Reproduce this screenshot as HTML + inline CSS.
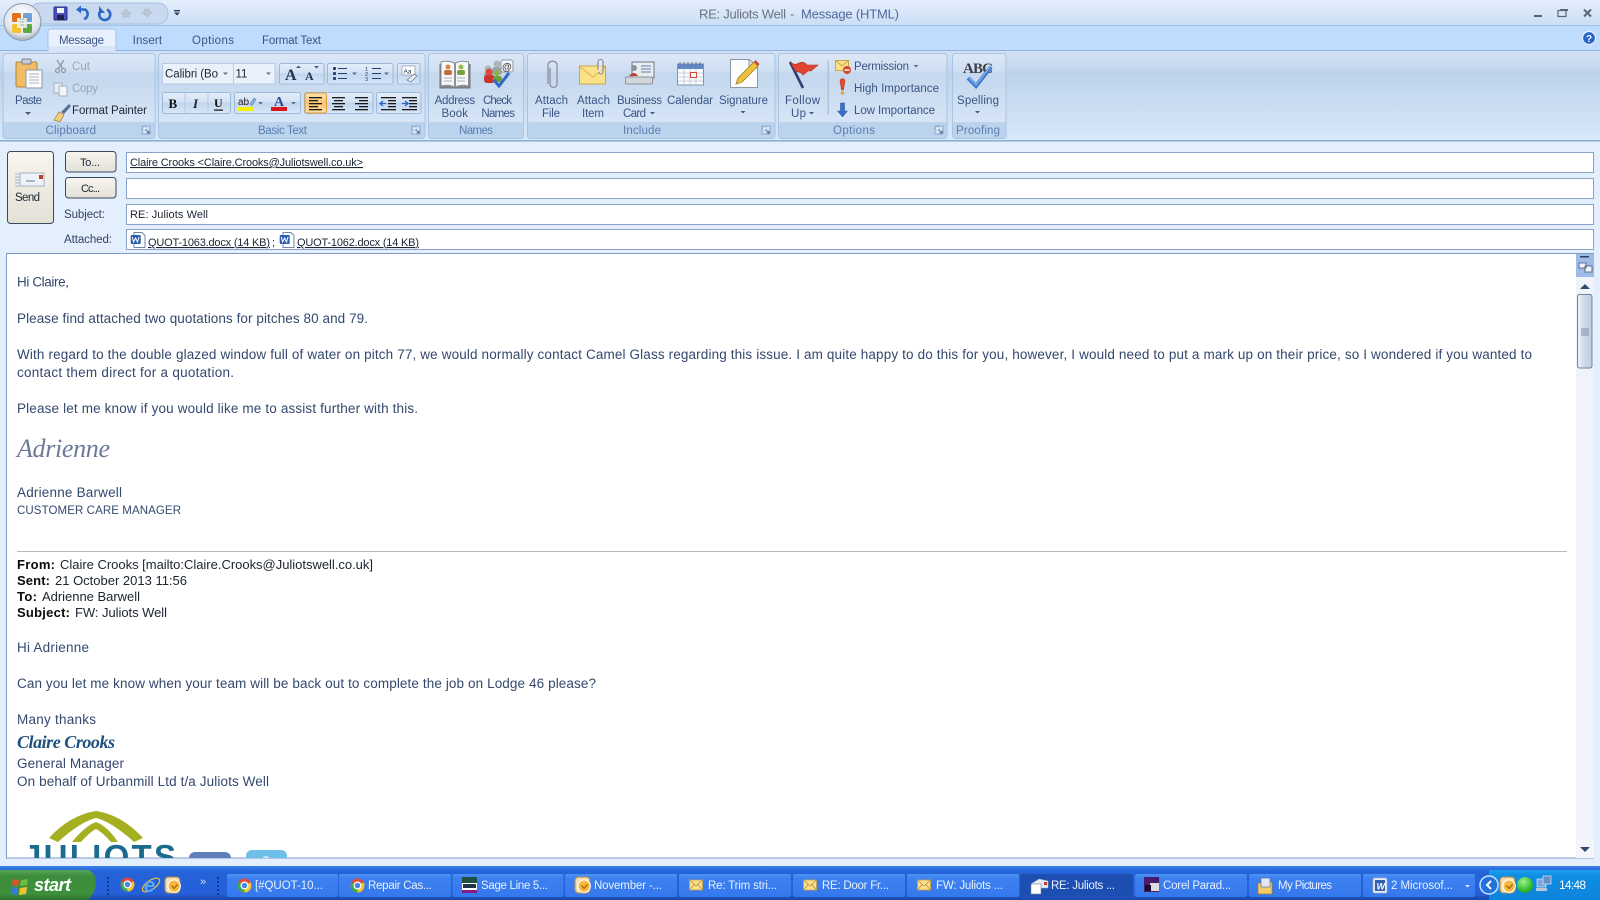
<!DOCTYPE html>
<html><head><meta charset="utf-8"><title>RE: Juliots Well - Message (HTML)</title>
<style>
html,body{margin:0;padding:0;width:1600px;height:900px;overflow:hidden;background:#e3effd}
svg{display:block}
text{font-family:"Liberation Sans",sans-serif;font-size:12px;fill:#3f5a88}
.r{font-size:11.5px;fill:#3a5484}
.rd{font-size:11.5px;fill:#222b3a}
.g{font-size:11.5px;fill:#5a7eb0}
.gy{font-size:11.5px;fill:#9aa6b6}
.b{font-size:13.5px;fill:#34486e}
.q{font-size:13px;fill:#1c2430}
.qb{font-size:13px;fill:#0a0a0a;font-weight:bold}
.h{font-size:11px;fill:#1d2536}
.l{font-size:11.5px;fill:#33435f}
.t{font-size:11.5px;fill:#e8f0ff}
</style></head><body>
<svg width="1600" height="900" viewBox="0 0 1600 900" xmlns="http://www.w3.org/2000/svg">
<defs>
<linearGradient id="tb" x1="0" y1="0" x2="0" y2="1"><stop offset="0" stop-color="#e4effd"/><stop offset=".5" stop-color="#d8e6f8"/><stop offset="1" stop-color="#cbdef5"/></linearGradient>
<linearGradient id="rib" x1="0" y1="0" x2="0" y2="1"><stop offset="0" stop-color="#d3e2f6"/><stop offset=".2" stop-color="#c7d9ef"/><stop offset=".25" stop-color="#bcd2ea"/><stop offset="1" stop-color="#d8e8fa"/></linearGradient>
<linearGradient id="grp" x1="0" y1="0" x2="0" y2="1"><stop offset="0" stop-color="#dce8f8"/><stop offset=".2" stop-color="#d0dff2"/><stop offset=".24" stop-color="#c4d7ed"/><stop offset="1" stop-color="#dce9f9"/></linearGradient>
<linearGradient id="btn" x1="0" y1="0" x2="0" y2="1"><stop offset="0" stop-color="#e4eefb"/><stop offset=".45" stop-color="#d2e1f4"/><stop offset=".5" stop-color="#c1d5ee"/><stop offset="1" stop-color="#d9e7f8"/></linearGradient>
<linearGradient id="act" x1="0" y1="0" x2="0" y2="1"><stop offset="0" stop-color="#fde2ac"/><stop offset=".5" stop-color="#fbc56e"/><stop offset="1" stop-color="#fde0a5"/></linearGradient>
<linearGradient id="sb" x1="0" y1="0" x2="0" y2="1"><stop offset="0" stop-color="#f7f5ef"/><stop offset="1" stop-color="#e3e0d6"/></linearGradient>
<linearGradient id="thumb" x1="0" y1="0" x2="1" y2="0"><stop offset="0" stop-color="#eef3fa"/><stop offset=".5" stop-color="#ccd9ea"/><stop offset="1" stop-color="#bccde2"/></linearGradient>
<linearGradient id="bar" x1="0" y1="0" x2="0" y2="1"><stop offset="0" stop-color="#3a80e8"/><stop offset=".15" stop-color="#2463d8"/><stop offset=".8" stop-color="#2560db"/><stop offset="1" stop-color="#1a47a8"/></linearGradient>
<linearGradient id="tsk" x1="0" y1="0" x2="0" y2="1"><stop offset="0" stop-color="#4d93f4"/><stop offset=".2" stop-color="#3c80f0"/><stop offset="1" stop-color="#3578ec"/></linearGradient>
<linearGradient id="start" x1="0" y1="0" x2="0" y2="1"><stop offset="0" stop-color="#5aa558"/><stop offset=".2" stop-color="#3d8d3c"/><stop offset=".8" stop-color="#3e913c"/><stop offset="1" stop-color="#2d6e2e"/></linearGradient>
<linearGradient id="tray" x1="0" y1="0" x2="0" y2="1"><stop offset="0" stop-color="#1aa0ee"/><stop offset=".2" stop-color="#0f8ce3"/><stop offset="1" stop-color="#0d84dc"/></linearGradient>
<radialGradient id="orb" cx=".5" cy=".35" r=".7"><stop offset="0" stop-color="#ffffff"/><stop offset=".7" stop-color="#dfe5ec"/><stop offset="1" stop-color="#8a96a6"/></radialGradient>
<radialGradient id="gb" cx=".4" cy=".3" r=".8"><stop offset="0" stop-color="#a5f08a"/><stop offset=".6" stop-color="#3cc43a"/><stop offset="1" stop-color="#1e8f20"/></radialGradient>
<clipPath id="bodyclip"><rect x="7" y="254" width="1569" height="604"/></clipPath>
<symbol id="env" viewBox="0 0 14 12"><rect x=".5" y="1" width="13" height="10" fill="#fbe08c" stroke="#c9a04a" stroke-width=".8"/><path d="M1 1.5 7 7 13 1.5M1 10.5 5 5.5M13 10.5 9 5.5" fill="none" stroke="#b48c3c" stroke-width=".8"/></symbol>
<symbol id="chr" viewBox="0 0 16 16"><circle cx="8" cy="8" r="7.5" fill="#e04a3a"/><path d="M8 8 1.5 4.5A7.5 7.5 0 0 0 8 15.5Z" fill="#3eaa4e"/><path d="M8 8V15.5A7.5 7.5 0 0 0 14.5 4.5Z" fill="#f0c92e"/><circle cx="8" cy="8" r="3.6" fill="#4c85e8" stroke="#fff" stroke-width="1.3"/></symbol>
<symbol id="otl" viewBox="0 0 16 16"><rect x="1" y="1" width="13" height="14" rx="3" fill="#f4dcb0" stroke="#c89a50"/><circle cx="9" cy="9" r="5.5" fill="#f7b83e" stroke="#fff"/><path d="M6.5 8.5 9 11 12 7.5" fill="none" stroke="#a86a10" stroke-width="1.2"/></symbol>
<symbol id="launch" viewBox="0 0 9 9"><rect x=".5" y=".5" width="8" height="8" fill="#d6e4f5" stroke="#7f9cc2" stroke-width=".8"/><rect x="1.5" y="1.5" width="3" height="3" fill="#fff" stroke="#7f9cc2" stroke-width=".5"/><path d="M4 4 7.500 7.500M7.500 5V7.500H5" stroke="#3f5a88" stroke-width=".8" fill="none"/></symbol>
<symbol id="word" viewBox="0 0 16 16"><path d="M4 .5H12L15 3.5V15.5H4Z" fill="#fff" stroke="#6d87a8"/><rect x=".7" y="3" width="10" height="9" rx="1" fill="#2a5fb0"/><path d="M2.300 5 3.600 10 5.600 6 7.500 10 9 5" fill="none" stroke="#fff" stroke-width="1"/></symbol>
</defs>

<!-- window bg -->
<rect width="1600" height="900" fill="#e3effd"/>
<rect width="1600" height="26" fill="url(#tb)"/>
<rect y="25" width="1600" height="1" fill="#a4c3e8"/>
<rect y="26" width="1600" height="24" fill="#bfdbfe"/>
<rect y="50" width="1600" height="90" fill="url(#rib)"/>
<rect y="50" width="1600" height="1" fill="#8db2e3"/>
<rect y="140" width="1600" height="1.6" fill="#8eaed4"/>

<!-- QAT -->
<rect x="30" y="3" width="138" height="21" rx="10" fill="#c9daf0" stroke="#a3bfe0"/>
<circle cx="22.400" cy="22" r="18.500" fill="url(#orb)" stroke="#8e9aaa"/>
<g>
<rect x="12" y="13" width="9" height="9" rx="1.500" fill="#e2711d"/>
<rect x="23" y="13" width="9" height="9" rx="1.500" fill="#5f8fc9" opacity=".85"/>
<rect x="12" y="24" width="9" height="9" rx="1.500" fill="#f1c232"/>
<rect x="23" y="24" width="9" height="9" rx="1.500" fill="#5fa84a"/>
<rect x="17" y="18" width="10" height="10" fill="#eef3e8" opacity=".85"/>
<path d="M20 19h4M20 22h4M20 25h4" stroke="#9ab" stroke-width="1"/>
</g>
<!-- save -->
<rect x="54" y="7" width="13" height="13" rx="1" fill="#4a4fc0" stroke="#2a2c80"/>
<rect x="57" y="8" width="7" height="5" fill="#eef2fb"/><rect x="57" y="15" width="7" height="5" fill="#20224e"/>
<!-- undo -->
<path d="M84 19a5.200 5.200 0 0 0 1-9.500h-5" fill="none" stroke="#3069c4" stroke-width="2.600"/><path d="M76 9.500l5-4v8Z" fill="#3069c4"/>
<!-- redo -->
<path d="M107 9.500a5.500 5.500 0 1 1-6 1" fill="none" stroke="#3069c4" stroke-width="2.600"/><path d="M99 6v7h6Z" fill="#3069c4"/>
<!-- up/down -->
<path d="M121 14l5-5 5 5h-2.500v3h-5v-3Z" fill="#bcc7d6" stroke="#a8b5c8" stroke-width=".6"/>
<path d="M142 12l5 5 5-5h-2.500v-3h-5v3Z" fill="#bcc7d6" stroke="#a8b5c8" stroke-width=".6"/>
<path d="M174 10h6v1.400h-6ZM174 12.500h6l-3 3Z" fill="#2b3e5e"/>
<!-- title -->
<text x="699" y="18.500" textLength="87" style="font-size:13px;fill:#6a7280">RE: Juliots Well</text>
<text x="790" y="18.500" style="font-size:13px;fill:#6a7280">-</text>
<text x="801" y="18.500" textLength="98" style="font-size:13px;fill:#51689d">Message (HTML)</text>
<!-- window controls -->
<rect x="1534" y="15" width="8" height="2" fill="#5c6672"/>
<rect x="1558" y="10.500" width="8" height="6" fill="none" stroke="#5c6672" stroke-width="1.200"/><rect x="1560" y="9" width="8" height="2" fill="#5c6672"/>
<path d="M1584 9.500l7 7M1591 9.500l-7 7" stroke="#5c6672" stroke-width="2"/>
<circle cx="1589" cy="38" r="6.500" fill="#2a66c8" stroke="#e7f0fb" stroke-width="1.200"/>
<text x="1586" y="42" style="font-size:10px;font-weight:bold;fill:#fff">?</text>

<!-- tabs -->
<path d="M48 50V32q0-3 3-3H113q3 0 3 3V50Z" fill="#e7f0fc" stroke="#a7c3e6"/>
<rect x="48.500" y="46" width="67" height="5" fill="#d7e5f7"/>
<text class="r" x="59" y="44" textLength="45">Message</text>
<text class="r" x="132.600" y="44" textLength="29.500">Insert</text>
<text class="r" x="192" y="44" textLength="42">Options</text>
<text class="r" x="262" y="44" textLength="59">Format Text</text>

<!-- groups -->
<g fill="url(#grp)" stroke="#a9c3e2">
<rect x="3" y="53.500" width="152" height="85" rx="3"/>
<rect x="158.500" y="53.500" width="266.500" height="85" rx="3"/>
<rect x="428.500" y="53.500" width="95" height="85" rx="3"/>
<rect x="527.500" y="53.500" width="247.500" height="85" rx="3"/>
<rect x="778.500" y="53.500" width="168.500" height="85" rx="3"/>
<rect x="952.500" y="53.500" width="53.500" height="85" rx="3"/>
</g>
<g fill="#bcd3ee">
<rect x="3.500" y="122" width="151" height="16" rx="2"/>
<rect x="159" y="122" width="265.500" height="16" rx="2"/>
<rect x="429" y="122" width="94" height="16" rx="2"/>
<rect x="528" y="122" width="246.500" height="16" rx="2"/>
<rect x="779" y="122" width="167.500" height="16" rx="2"/>
<rect x="953" y="122" width="52.500" height="16" rx="2"/>
</g>
<text class="g" x="45.500" y="134" textLength="50.500">Clipboard</text>
<text class="g" x="258" y="134" textLength="49">Basic Text</text>
<text class="g" x="459" y="134" textLength="34">Names</text>
<text class="g" x="623" y="134" textLength="38">Include</text>
<text class="g" x="833" y="134" textLength="42">Options</text>
<text class="g" x="956" y="134" textLength="44">Proofing</text>
<use href="#launch" x="141.500" y="125.500" width="9" height="9"/>
<use href="#launch" x="411.500" y="125.500" width="9" height="9"/>
<use href="#launch" x="761.500" y="125.500" width="9" height="9"/>
<use href="#launch" x="934.500" y="125.500" width="9" height="9"/>

<!-- Clipboard -->
<rect x="16" y="62" width="21" height="25" rx="1.500" fill="#f2bc64" stroke="#b08640"/>
<rect x="22" y="59" width="9" height="5" rx="1" fill="#c8ccd6" stroke="#7a7f8a"/>
<path d="M26 70h16v18H26Z" fill="#fbfcfe" stroke="#8d99ab"/><path d="M29 74h10M29 77h10M29 80h10M29 83h10" stroke="#a8b2c1"/>
<text class="r" x="15" y="104" textLength="27">Paste</text>
<path d="M25 112h6l-3 3Z" fill="#44597d"/>
<path d="M57 60l6 9M64 60l-6 9" stroke="#8d99a9" stroke-width="1.400"/><circle cx="57.500" cy="70.500" r="2" fill="none" stroke="#8d99a9" stroke-width="1.200"/><circle cx="63.500" cy="70.500" r="2" fill="none" stroke="#8d99a9" stroke-width="1.200"/>
<text class="gy" x="72" y="70" textLength="18">Cut</text>
<rect x="54" y="83" width="8" height="10" fill="#e9eef4" stroke="#a5afbc"/><rect x="59" y="86" width="8" height="10" fill="#f2f5f9" stroke="#a5afbc"/>
<text class="gy" x="72" y="92" textLength="26">Copy</text>
<path d="M54 120l5-8 5 3-4 7Z" fill="#f1cf80" stroke="#9a7a3a" stroke-width=".7"/><path d="M61 112l8-8 2 2-7 8Z" fill="#5a6f95"/>
<text class="rd" x="72" y="114" textLength="75">Format Painter</text>

<!-- Basic Text row 1 -->
<rect x="162.500" y="63.500" width="112.500" height="20.500" fill="#eaf1fb" stroke="#b6cbe5"/><rect x="233" y="64" width="1" height="20" fill="#b6cbe5"/>
<text class="h" style="font-size:11.500px" x="165" y="77.500" textLength="53">Calibri (Bo</text>
<path d="M223 72.500h5l-2.500 2.500Z" fill="#5a6f8f"/>
<text class="h" style="font-size:11.500px" x="235.500" y="77.500">11</text>
<path d="M266 72.500h5l-2.500 2.500Z" fill="#5a6f8f"/>
<rect x="279.500" y="63.500" width="44.500" height="20.500" rx="2" fill="url(#btn)" stroke="#9eb8d8"/>
<text x="285" y="80" style="font-family:'Liberation Serif',serif;font-size:16px;font-weight:bold;fill:#22304a">A</text>
<path d="M296 68h5l-2.500-2.500Z" fill="#3a5a90"/>
<text x="305" y="80" style="font-family:'Liberation Serif',serif;font-size:12px;font-weight:bold;fill:#22304a">A</text>
<path d="M314 66h5l-2.500 2.500Z" fill="#3a5a90"/>
<rect x="327.500" y="63.500" width="65.500" height="20.500" rx="2" fill="url(#btn)" stroke="#9eb8d8"/>
<g fill="#22406e"><rect x="333" y="67" width="3" height="3" rx="1"/><rect x="333" y="72" width="3" height="3" rx="1"/><rect x="333" y="77" width="3" height="3" rx="1"/>
<rect x="338" y="68" width="9" height="1"/><rect x="338" y="73" width="9" height="1"/><rect x="338" y="78" width="9" height="1"/>
<path d="M352 72.500h5l-2.500 2.500ZM384 72.500h5l-2.500 2.500Z" fill="#5a6f8f"/>
<rect x="372" y="68" width="9" height="1"/><rect x="372" y="73" width="9" height="1"/><rect x="372" y="78" width="9" height="1"/></g>
<text x="365" y="71" style="font-size:5.500px;fill:#22406e">1</text><text x="365" y="76" style="font-size:5.500px;fill:#22406e">2</text><text x="365" y="81" style="font-size:5.500px;fill:#22406e">3</text>
<rect x="397.500" y="63.500" width="22.500" height="20.500" rx="2" fill="url(#btn)" stroke="#9eb8d8"/>
<rect x="402" y="66" width="13" height="9" fill="#fff" stroke="#8795a8" stroke-width=".7"/><text x="403.500" y="73.500" style="font-size:6.500px;fill:#22304a">Aa</text>
<path d="M407 80l7-6 3 2-6 6Z" fill="#e9edf4" stroke="#74849b" stroke-width=".8"/>
<!-- row 2 -->
<rect x="162.500" y="92.500" width="68" height="21" rx="2" fill="url(#btn)" stroke="#9eb8d8"/>
<path d="M185 93v20M208 93v20" stroke="#b6cbe5"/>
<text x="168.500" y="108" style="font-family:'Liberation Serif',serif;font-size:13px;font-weight:bold;fill:#111">B</text>
<text x="193" y="108" style="font-family:'Liberation Serif',serif;font-size:13px;font-style:italic;font-weight:bold;fill:#222">I</text>
<text x="214" y="107" style="font-family:'Liberation Serif',serif;font-size:12px;font-weight:bold;fill:#111">U</text><rect x="214" y="109.500" width="9" height="1.200" fill="#111"/>
<rect x="234.500" y="92.500" width="66" height="21" rx="2" fill="url(#btn)" stroke="#9eb8d8"/>
<text x="238" y="105" style="font-size:10px;fill:#222">ab</text><path d="M250 104l4-6 2 1.500-4 6Z" fill="#8bb2de" stroke="#5b7ba8" stroke-width=".6"/><rect x="238" y="107" width="16" height="4" fill="#f4f000"/>
<path d="M258 102h5l-2.500 2.500ZM291 102h5l-2.500 2.500Z" fill="#5a6f8f"/>
<text x="274" y="106" style="font-family:'Liberation Serif',serif;font-size:14px;font-weight:bold;fill:#2b4e90">A</text><rect x="271" y="107" width="16" height="4" fill="#d8141c"/>
<rect x="304.500" y="92.500" width="68.500" height="21" rx="2" fill="url(#btn)" stroke="#9eb8d8"/>
<rect x="305" y="93" width="21.500" height="20" rx="2" fill="url(#act)" stroke="#d99b3e"/>
<g fill="#1a1a1a"><rect x="309" y="97" width="13" height="1.300"/><rect x="309" y="100" width="9" height="1.300"/><rect x="309" y="103" width="13" height="1.300"/><rect x="309" y="106" width="9" height="1.300"/><rect x="309" y="109" width="13" height="1.300"/>
<rect x="332" y="97" width="13" height="1.300"/><rect x="334" y="100" width="9" height="1.300"/><rect x="332" y="103" width="13" height="1.300"/><rect x="334" y="106" width="9" height="1.300"/><rect x="332" y="109" width="13" height="1.300"/>
<rect x="355" y="97" width="13" height="1.300"/><rect x="359" y="100" width="9" height="1.300"/><rect x="355" y="103" width="13" height="1.300"/><rect x="359" y="106" width="9" height="1.300"/><rect x="355" y="109" width="13" height="1.300"/></g>
<rect x="376.500" y="92.500" width="44.500" height="21" rx="2" fill="url(#btn)" stroke="#9eb8d8"/>
<g fill="#1a1a1a"><rect x="381" y="97" width="15" height="1.300"/><rect x="388" y="100" width="8" height="1.300"/><rect x="388" y="103" width="8" height="1.300"/><rect x="388" y="106" width="8" height="1.300"/><rect x="381" y="109" width="15" height="1.300"/>
<rect x="402" y="97" width="15" height="1.300"/><rect x="409" y="100" width="8" height="1.300"/><rect x="409" y="103" width="8" height="1.300"/><rect x="409" y="106" width="8" height="1.300"/><rect x="402" y="109" width="15" height="1.300"/></g>
<path d="M386 103.500h-5M383 101l-3 2.500 3 2.500" stroke="#2a63c4" fill="none" stroke-width="1.300"/><path d="M402 103.500h5M405 101l3 2.500-3 2.500" stroke="#2a63c4" fill="none" stroke-width="1.300"/>

<!-- Names -->
<path d="M440 64v24h30V64" fill="#7f8790" stroke="#6d747c"/>
<path d="M441 62q7-2 13.500 1v24q-6-3-13.500-1ZM455.500 63q6-3 13-1v24q-7-2-13 1Z" fill="#f6f7f9" stroke="#8d8f94"/>
<circle cx="448" cy="67" r="2.500" fill="#d9854a"/><rect x="444" y="70" width="8" height="5" rx="2" fill="#c86c3a"/>
<circle cx="461" cy="67" r="2.500" fill="#9ab850"/><rect x="457" y="70" width="8" height="5" rx="2" fill="#78a23a"/>
<path d="M444 78h8M444 81h8M457 78h8M457 81h8" stroke="#a8aeb8"/>
<text class="r" x="434.600" y="104" textLength="40.500">Address</text>
<text class="r" x="441.500" y="117" textLength="26.500">Book</text>
<circle cx="497" cy="64" r="3.500" fill="#aeb4bc"/><rect x="492" y="67" width="10" height="8" rx="3" fill="#9aa2ae"/>
<circle cx="488" cy="69" r="3.500" fill="#aeb4bc"/><rect x="484" y="72" width="9" height="6" rx="3" fill="#9aa2ae"/>
<circle cx="489" cy="72" r="3.500" fill="#e0473c"/><rect x="484" y="75" width="11" height="8" rx="3" fill="#c9352c"/>
<circle cx="497" cy="73" r="3" fill="#86b54a"/><rect x="493" y="76" width="9" height="6" rx="2.500" fill="#6ea03a"/>
<rect x="501" y="60" width="12" height="12" rx="2" fill="#f4f6f9" stroke="#8f99a8"/><text x="502" y="70" style="font-size:10px;font-weight:bold;fill:#444">@</text>
<path d="M494 80l5 6 10-13" fill="none" stroke="#3269c2" stroke-width="3"/>
<text class="r" x="483" y="104" textLength="29">Check</text>
<text class="r" x="481.400" y="117" textLength="33.600">Names</text>

<!-- Include -->
<path d="M549 68v16a3.500 3.500 0 0 0 7 0V64a5 5 0 0 0-9 0v20" fill="none" stroke="#8a9099" stroke-width="1.300" transform="translate(1 0)"/>
<text class="r" x="535" y="104" textLength="33">Attach</text><text class="r" x="542" y="117" textLength="18">File</text>
<rect x="579.500" y="66" width="26" height="18" fill="#fbe188" stroke="#c9a84a"/><path d="M580 67l13 10 12-10" fill="none" stroke="#d6b354"/>
<path d="M598 70V62a2.500 2.500 0 0 1 5 0v10a2 2 0 0 1-4 0" fill="#f2f2f2" fill-opacity=".5" stroke="#7d858f" stroke-width="1.100"/>
<text class="r" x="577" y="104" textLength="33">Attach</text><text class="r" x="582" y="117" textLength="22">Item</text>
<rect x="632" y="62" width="22" height="16" fill="#e9edf2" stroke="#717882"/>
<rect x="625.500" y="77" width="27" height="7" rx="1" fill="#d1d4d8" stroke="#8d9198"/>
<circle cx="634" cy="68" r="3" fill="#8b8f98"/><path d="M629 76q5-6 9 0Z" fill="#c03a2e"/><path d="M641 66h10M641 69h10M641 72h10" stroke="#5f7fa6"/>
<text class="r" x="617" y="104" textLength="45">Business</text><text class="r" x="623" y="117" textLength="23">Card</text><path d="M650 112h5l-2.500 2.500Z" fill="#44597d"/>
<rect x="677.500" y="64" width="26" height="21" fill="#fafbfd" stroke="#8293ab"/><rect x="678" y="64" width="25" height="5" fill="#5f88c4"/>
<path d="M678 73h25M678 77h25M678 81h25M684 69v16M690 69v16M696 69v16" stroke="#b9c4d4" stroke-width=".8"/><rect x="690.500" y="72.500" width="6" height="5" fill="#fff" stroke="#d4493a"/>
<path d="M680 62v4M684 62v4M688 62v4M692 62v4M696 62v4M700 62v4" stroke="#6a7a90"/>
<text class="r" x="667" y="104" textLength="46">Calendar</text>
<path d="M730.500 59.500h19l8 8v20h-27Z" fill="#fcfdff" stroke="#8d96a3"/><path d="M749 60v8h8" fill="#dfe3ea" stroke="#8d96a3"/>
<path d="M736 84l2-6 16-16 4 4-16 16Z" fill="#f0c23a" stroke="#9c7c24" stroke-width=".8"/><path d="M754 62l4 4 1.500-2-4-4Z" fill="#c8493c"/>
<text class="r" x="719" y="104" textLength="49">Signature</text><path d="M740.500 111h5l-2.500 2.500Z" fill="#44597d"/>

<!-- Options -->
<path d="M790 62l13 26" stroke="#2c3f77" stroke-width="2.600" fill="none"/>
<path d="M790 62q5 4 9 1 5-2 8 2l11 0-7 6-3 0-5 4q-3-4-7-3Z" fill="#e2452f" stroke="#a92c1c" stroke-width=".6"/>
<text class="r" x="785" y="104" textLength="35">Follow</text><text class="r" x="791" y="117" textLength="15">Up</text><path d="M809 112h5l-2.500 2.500Z" fill="#44597d"/>
<rect x="827.700" y="60" width="1" height="55" fill="#9fb5d2"/>
<rect x="835.500" y="60.500" width="13" height="10" fill="#fbe188" stroke="#c9a84a"/><path d="M836 61l6 5 6-5" fill="none" stroke="#c9a84a"/><circle cx="847" cy="70" r="4" fill="#d8432f"/><rect x="844.500" y="69.300" width="5" height="1.500" fill="#fff"/>
<text class="r" x="854" y="70" textLength="55">Permission</text><path d="M913.500 65h5l-2.500 2.500Z" fill="#5a6f8f"/>
<path d="M840 81a2.500 2.500 0 0 1 5 0l-1.500 9h-2Z" fill="#e04a28" stroke="#b5391c" stroke-width=".5"/><circle cx="842.500" cy="93" r="1.800" fill="#e9a03a"/>
<text class="r" x="854" y="92" textLength="85">High Importance</text>
<path d="M840.500 103h4v8h3l-5 6-5-6h3Z" fill="#3a6fc4" stroke="#25508f" stroke-width=".5"/>
<text class="r" x="854" y="114" textLength="81">Low Importance</text>

<!-- Proofing -->
<text x="963" y="73" textLength="30" style="font-family:'Liberation Serif',serif;font-size:15px;font-weight:bold;fill:#3a3f48">ABC</text>
<path d="M968 78l8 8 15-19" fill="none" stroke="#3f79d0" stroke-width="4"/>
<path d="M969 78l7 7 14-18" fill="none" stroke="#8db4ea" stroke-width="1.200"/>
<text class="r" x="957" y="104" textLength="42">Spelling</text><path d="M975 111h5l-2.500 2.500Z" fill="#44597d"/>

<!-- Header: send & fields -->
<rect x="7.500" y="151.500" width="46" height="72" rx="3" fill="url(#sb)" stroke="#3a4a5e"/>
<rect x="20" y="173" width="24" height="13" fill="#eef3fa" stroke="#8fa0b8" stroke-width=".8"/><path d="M26 181h9" stroke="#7a8a9e" stroke-width="1.200"/><rect x="39" y="175" width="4" height="4" fill="#b8402e"/>
<path d="M15 174h4M15 177h4M15 180h4M15 183h4M15 186h4" stroke="#a8b2c2"/>
<text class="h" style="font-size:11.500px" x="15" y="201" textLength="25">Send</text>
<rect x="65.500" y="151.500" width="50.500" height="20.500" rx="3" fill="url(#sb)" stroke="#3a4a5e"/>
<text class="h" x="80" y="166" textLength="20">To...</text>
<rect x="65.500" y="177.500" width="50.500" height="20.500" rx="3" fill="url(#sb)" stroke="#3a4a5e"/>
<text class="h" x="81" y="192" textLength="19">Cc...</text>
<text class="l" x="64" y="218" textLength="41">Subject:</text>
<text class="l" x="64" y="243" textLength="48">Attached:</text>
<g fill="#fff" stroke="#8aa2c4">
<rect x="126.500" y="152.500" width="1467" height="20"/>
<rect x="126.500" y="178.500" width="1467" height="20"/>
<rect x="126.500" y="204.500" width="1467" height="20"/>
<rect x="126.500" y="229.500" width="1467" height="20"/>
</g>
<text class="h" x="130" y="166" textLength="233" text-decoration="underline">Claire Crooks &lt;Claire.Crooks@Juliotswell.co.uk&gt;</text>
<text class="h" x="130" y="218" textLength="78">RE: Juliots Well</text>
<use href="#word" x="130" y="232" width="16" height="16"/>
<text class="h" x="148" y="246" textLength="122" text-decoration="underline">QUOT-1063.docx (14 KB)</text>
<text class="h" x="272" y="246">;</text>
<use href="#word" x="279" y="232" width="16" height="16"/>
<text class="h" x="297" y="246" textLength="122" text-decoration="underline">QUOT-1062.docx (14 KB)</text>

<!-- Body -->
<rect x="6.500" y="253.500" width="1587" height="604.500" fill="#fff" stroke="#7e9ccb"/>
<text class="b" x="17" y="286.500" textLength="52">Hi Claire,</text>
<text class="b" x="17" y="323" textLength="351">Please find attached two quotations for pitches 80 and 79.</text>
<text class="b" x="17" y="359" textLength="1515">With regard to the double glazed window full of water on pitch 77, we would normally contact Camel Glass regarding this issue. I am quite happy to do this for you, however, I would need to put a mark up on their price, so I wondered if you wanted to</text>
<text class="b" x="17" y="377" textLength="217">contact them direct for a quotation.</text>
<text class="b" x="17" y="413" textLength="401">Please let me know if you would like me to assist further with this.</text>
<text x="17" y="457" textLength="93" style="font-family:'Liberation Serif',serif;font-style:italic;font-size:26px;fill:#6c7a98">Adrienne</text>
<text class="b" x="17" y="497" textLength="105">Adrienne Barwell</text>
<text class="b" style="font-size:11.500px" x="17" y="514" textLength="164">CUSTOMER CARE MANAGER</text>
<rect x="17" y="551" width="1550" height="1" fill="#b5b9c0"/>
<text class="qb" x="17" y="569" textLength="38">From:</text>
<text class="q" x="60" y="569" textLength="313">Claire Crooks [mailto:Claire.Crooks@Juliotswell.co.uk]</text>
<text class="qb" x="17" y="585" textLength="33">Sent:</text>
<text class="q" x="55" y="585" textLength="132">21 October 2013 11:56</text>
<text class="qb" x="17" y="601" textLength="20">To:</text>
<text class="q" x="42" y="601" textLength="98">Adrienne Barwell</text>
<text class="qb" x="17" y="617" textLength="53">Subject:</text>
<text class="q" x="75" y="617" textLength="92">FW: Juliots Well</text>
<text class="b" x="17" y="652" textLength="72">Hi Adrienne</text>
<text class="b" x="17" y="688" textLength="579">Can you let me know when your team will be back out to complete the job on Lodge 46 please?</text>
<text class="b" x="17" y="724" textLength="79">Many thanks</text>
<text x="17" y="748" textLength="98" style="font-family:'Liberation Serif',serif;font-style:italic;font-weight:bold;font-size:18px;fill:#1e4f7e">Claire Crooks</text>
<text class="b" x="17" y="768" textLength="107">General Manager</text>
<text class="b" x="17" y="786" textLength="252">On behalf of Urbanmill Ltd t/a Juliots Well</text>

<g clip-path="url(#bodyclip)">
<path d="M49 838Q70 815 96 811Q122 815 143 838L134 842Q112 822 96 818Q80 822 58 842Z" fill="#a5b021"/>
<path d="M72 842Q85 826 96 822Q107 826 118 842L111 842Q102 832 96 829Q90 832 81 842Z" fill="#a5b021"/>
<text x="23" y="868" textLength="153" style="font-family:'Liberation Sans',sans-serif;font-weight:bold;font-size:33px;fill:#1b6b8f">JULIOTS</text>
<rect x="189" y="852" width="42" height="30" rx="6" fill="#5f7fb8"/>
<rect x="246" y="850" width="41" height="30" rx="6" fill="#6fc0e8"/>
<circle cx="266" cy="860" r="4" fill="#c8e8f8"/>
</g>

<!-- scrollbar -->
<rect x="1576" y="254" width="18" height="604" fill="#f0f4fa"/>
<rect x="1576" y="254" width="18" height="23" fill="#9dbbe6"/>
<rect x="1580" y="256" width="9" height="1.500" fill="#2e4468"/>
<path d="M1579 263h7v5h-7ZM1585 266h7v6h-7Z" fill="#eef2f8" stroke="#46566e" stroke-width=".8"/>
<path d="M1580 289l5-5 5 5Z" fill="#34486a"/>
<rect x="1577.500" y="294.500" width="14.500" height="73.500" rx="2" fill="url(#thumb)" stroke="#70829c"/>
<path d="M1581 329h8M1581 331h8M1581 333h8M1581 335h8" stroke="#7f8fa5"/>
<rect x="1577" y="840" width="17" height="18" fill="#f4f6fa"/>
<path d="M1580 847h10l-5 5Z" fill="#34486a"/>

<!-- Taskbar -->
<rect y="866" width="1600" height="34" fill="url(#bar)"/>
<path d="M0 870H88q7 2 8 12 0 10-8 18H0Z" fill="url(#start)"/>
<path d="M13 879l6 1-1 6-6-1Z" fill="#e2512a"/><path d="M21 880l7-1-1 6-7 1Z" fill="#6fbb3a"/><path d="M12 887l6 1-1 7-6-1Z" fill="#3a7ad8"/><path d="M20 888l7-1-1 7-7 1Z" fill="#f0c330"/>
<text x="34" y="891" textLength="37" style="font-size:18px;font-style:italic;font-weight:bold;fill:#fff">start</text>
<path d="M108 877v19M218 877v19" stroke="#0f3a90" stroke-width="2" stroke-dasharray="2 2"/>
<use href="#chr" x="120" y="877" width="15" height="15"/>
<ellipse cx="151" cy="885" rx="10" ry="4.500" fill="none" stroke="#e8c040" stroke-width="1.200" transform="rotate(-35 151 885)"/>
<text x="144" y="892" style="font-family:'Liberation Sans',sans-serif;font-size:20px;font-weight:bold;font-style:italic;fill:#5aa8ee">e</text>
<use href="#otl" x="164" y="876" width="18" height="18"/>
<text x="200" y="885" style="font-size:11px;fill:#cfe0ff">»</text>

<g fill="url(#tsk)">
<rect x="227" y="874" width="111" height="23" rx="2"/>
<rect x="339" y="874" width="112" height="23" rx="2"/>
<rect x="452.500" y="874" width="111" height="23" rx="2"/>
<rect x="565" y="874" width="112" height="23" rx="2"/>
<rect x="679" y="874" width="112" height="23" rx="2"/>
<rect x="793" y="874" width="112" height="23" rx="2"/>
<rect x="907" y="874" width="112" height="23" rx="2"/>
<rect x="1135" y="874" width="112" height="23" rx="2"/>
<rect x="1249" y="874" width="112" height="23" rx="2"/>
<rect x="1363" y="874" width="112" height="23" rx="2"/>
</g>
<rect x="1020" y="874" width="113" height="23" rx="2" fill="#1d4eb2"/>

<use href="#chr" x="237" y="878" width="15" height="15"/><text class="t" x="255" y="889" textLength="68">[#QUOT-10...</text>
<use href="#chr" x="350" y="878" width="15" height="15"/><text class="t" x="368" y="889" textLength="64">Repair Cas...</text>
<rect x="462" y="877" width="15" height="16" fill="#fff"/><rect x="462" y="877" width="15" height="6" fill="#1f4f3e"/><rect x="462" y="890" width="15" height="3" fill="#8a1a8a"/><rect x="463" y="884" width="13" height="4" fill="#234"/>
<text class="t" x="481" y="889" textLength="67">Sage Line 5...</text>
<use href="#otl" x="574" y="876" width="18" height="18"/><text class="t" x="594" y="889" textLength="68">November -...</text>
<use href="#env" x="689" y="879" width="14" height="12"/><text class="t" x="708" y="889" textLength="69">Re: Trim stri...</text>
<use href="#env" x="803" y="879" width="14" height="12"/><text class="t" x="822" y="889" textLength="67">RE: Door Fr...</text>
<use href="#env" x="917" y="879" width="14" height="12"/><text class="t" x="936" y="889" textLength="67">FW: Juliots ...</text>
<path d="M1031 884l8-5 9 2v7h-9v-4Z" fill="#e4ebf4" stroke="#a7b3c4" stroke-width=".5"/><rect x="1031" y="884" width="10" height="10" fill="#fff" stroke="#7488a4" stroke-width=".6"/><rect x="1044" y="882" width="3" height="3" fill="#c0392b"/>
<text class="t" x="1051" y="889" textLength="64">RE: Juliots ...</text>
<rect x="1144" y="877" width="15" height="15" fill="#4a1a6e"/><rect x="1150" y="883" width="9" height="8" fill="#ddd"/><rect x="1145" y="885" width="6" height="6" fill="#1a0a30"/>
<text class="t" x="1163" y="889" textLength="68">Corel Parad...</text>
<path d="M1258 883h4l1-1h9v12h-14Z" fill="#f4ca6a" stroke="#a07a2c" stroke-width=".7"/><rect x="1261" y="878" width="9" height="9" fill="#dfe8f4" stroke="#5a74a0" stroke-width=".7"/>
<text class="t" x="1278" y="889" textLength="54">My Pictures</text>
<rect x="1373" y="878" width="14" height="15" rx="1.500" fill="#e8eef6" stroke="#a6b2c4" stroke-width=".7"/><rect x="1375" y="880" width="10" height="11" fill="#2f5fa8"/><text x="1376.500" y="889.500" style="font-size:9px;font-weight:bold;font-style:italic;fill:#fff">W</text>
<text class="t" x="1391" y="889" textLength="62">2 Microsof...</text>
<path d="M1465 885h5l-2.500 2.500Z" fill="#dfeaff"/>

<!-- tray -->
<path d="M1489 870H1600V900H1489Z" fill="url(#tray)"/>
<circle cx="1489" cy="885" r="9" fill="#2470dc" stroke="#c8e4ff" stroke-width="1.500"/>
<path d="M1491 881l-4 4 4 4" fill="none" stroke="#fff" stroke-width="2"/>
<use href="#otl" x="1499" y="876" width="18" height="18"/>
<circle cx="1525" cy="885" r="8" fill="url(#gb)"/>
<rect x="1537" y="879" width="9" height="8" fill="#7aa6d8" stroke="#e0eaf8" stroke-width=".7"/><rect x="1543" y="876" width="8" height="8" fill="#5f8ec8" stroke="#e0eaf8" stroke-width=".7"/><rect x="1536" y="888" width="11" height="3" fill="#b8c8dc"/>
<text x="1559" y="889" textLength="27" style="font-size:12px;fill:#fff">14:48</text>
</svg>
</body></html>
